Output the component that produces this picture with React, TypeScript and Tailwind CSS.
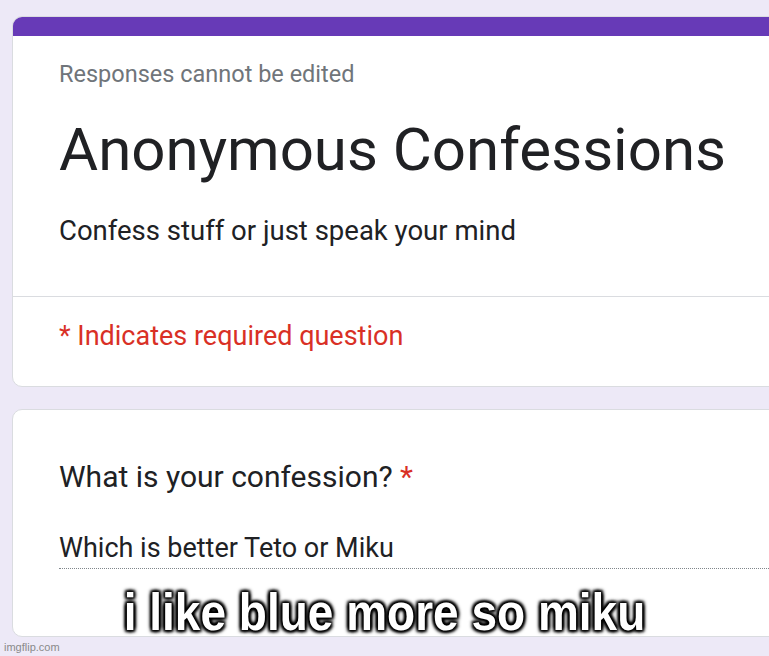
import React from 'react';

export default function App() {
  return (
    <div className="relative w-[769px] h-[656px] overflow-hidden bg-[#ede9f7]" style={{ fontFamily: 'Roboto, "Liberation Sans", sans-serif' }}>
      {/* Form header card */}
      <div className="ml-[12px] mt-[16px] w-[820px] rounded-[10px] bg-white border border-[#dadce0] overflow-hidden">
        <div className="h-[19px] bg-[#673ab7]" />
        <div className="pl-[46px] pt-[22px]">
          <p className="text-[23.5px] leading-[32px] text-[#70757a]">Responses cannot be edited</p>
          <h1 className="mt-[24px] text-[60px] leading-[72px] text-[#202124]">Anonymous Confessions</h1>
          <p className="mt-[27px] text-[27.5px] leading-[36px] text-[#202124]">Confess stuff or just speak your mind</p>
        </div>
        <div className="mt-[47px] border-t border-[#dadce0]" />
        <div className="pl-[46px] pt-[21px] pb-[32px]">
          <p className="text-[27px] leading-[36px] text-[#d93025]">* Indicates required question</p>
        </div>
      </div>

      {/* Question card */}
      <div className="ml-[12px] mt-[22px] w-[820px] h-[228px] rounded-[10px] bg-white border border-[#dadce0]">
        <div className="pl-[46px] pt-[47px]">
          <p className="text-[30px] leading-[40px] text-[#202124]">
            What is your confession? <span className="text-[#d93025]">*</span>
          </p>
          <div className="mt-[33px] border-b border-dotted border-[#80868b] pb-[2px]">
            <p className="text-[27px] leading-[36px] text-[#202124]">Which is better Teto or Miku</p>
          </div>
        </div>
      </div>

      {/* Meme caption */}
      <div className="absolute left-0 right-0 top-[586px] text-center">
        <span
          className="inline-block scale-y-[1.13] text-[46px] leading-[52px] font-bold text-white [text-shadow:0_0_3px_#000,0_0_3px_#000,2px_2px_3px_#000,-2px_-2px_3px_#000,2px_-2px_3px_#000,-2px_2px_3px_#000]"
          style={{ fontFamily: '"Liberation Sans", Arial, sans-serif' }}
        >
          i like blue more so miku
        </span>
      </div>

      <div className="absolute left-[4px] top-[639px] text-[11px] leading-[16px] text-[#8a8a8a]" style={{ fontFamily: '"Liberation Sans", Arial, sans-serif' }}>
        imgflip.com
      </div>
    </div>
  );
}
